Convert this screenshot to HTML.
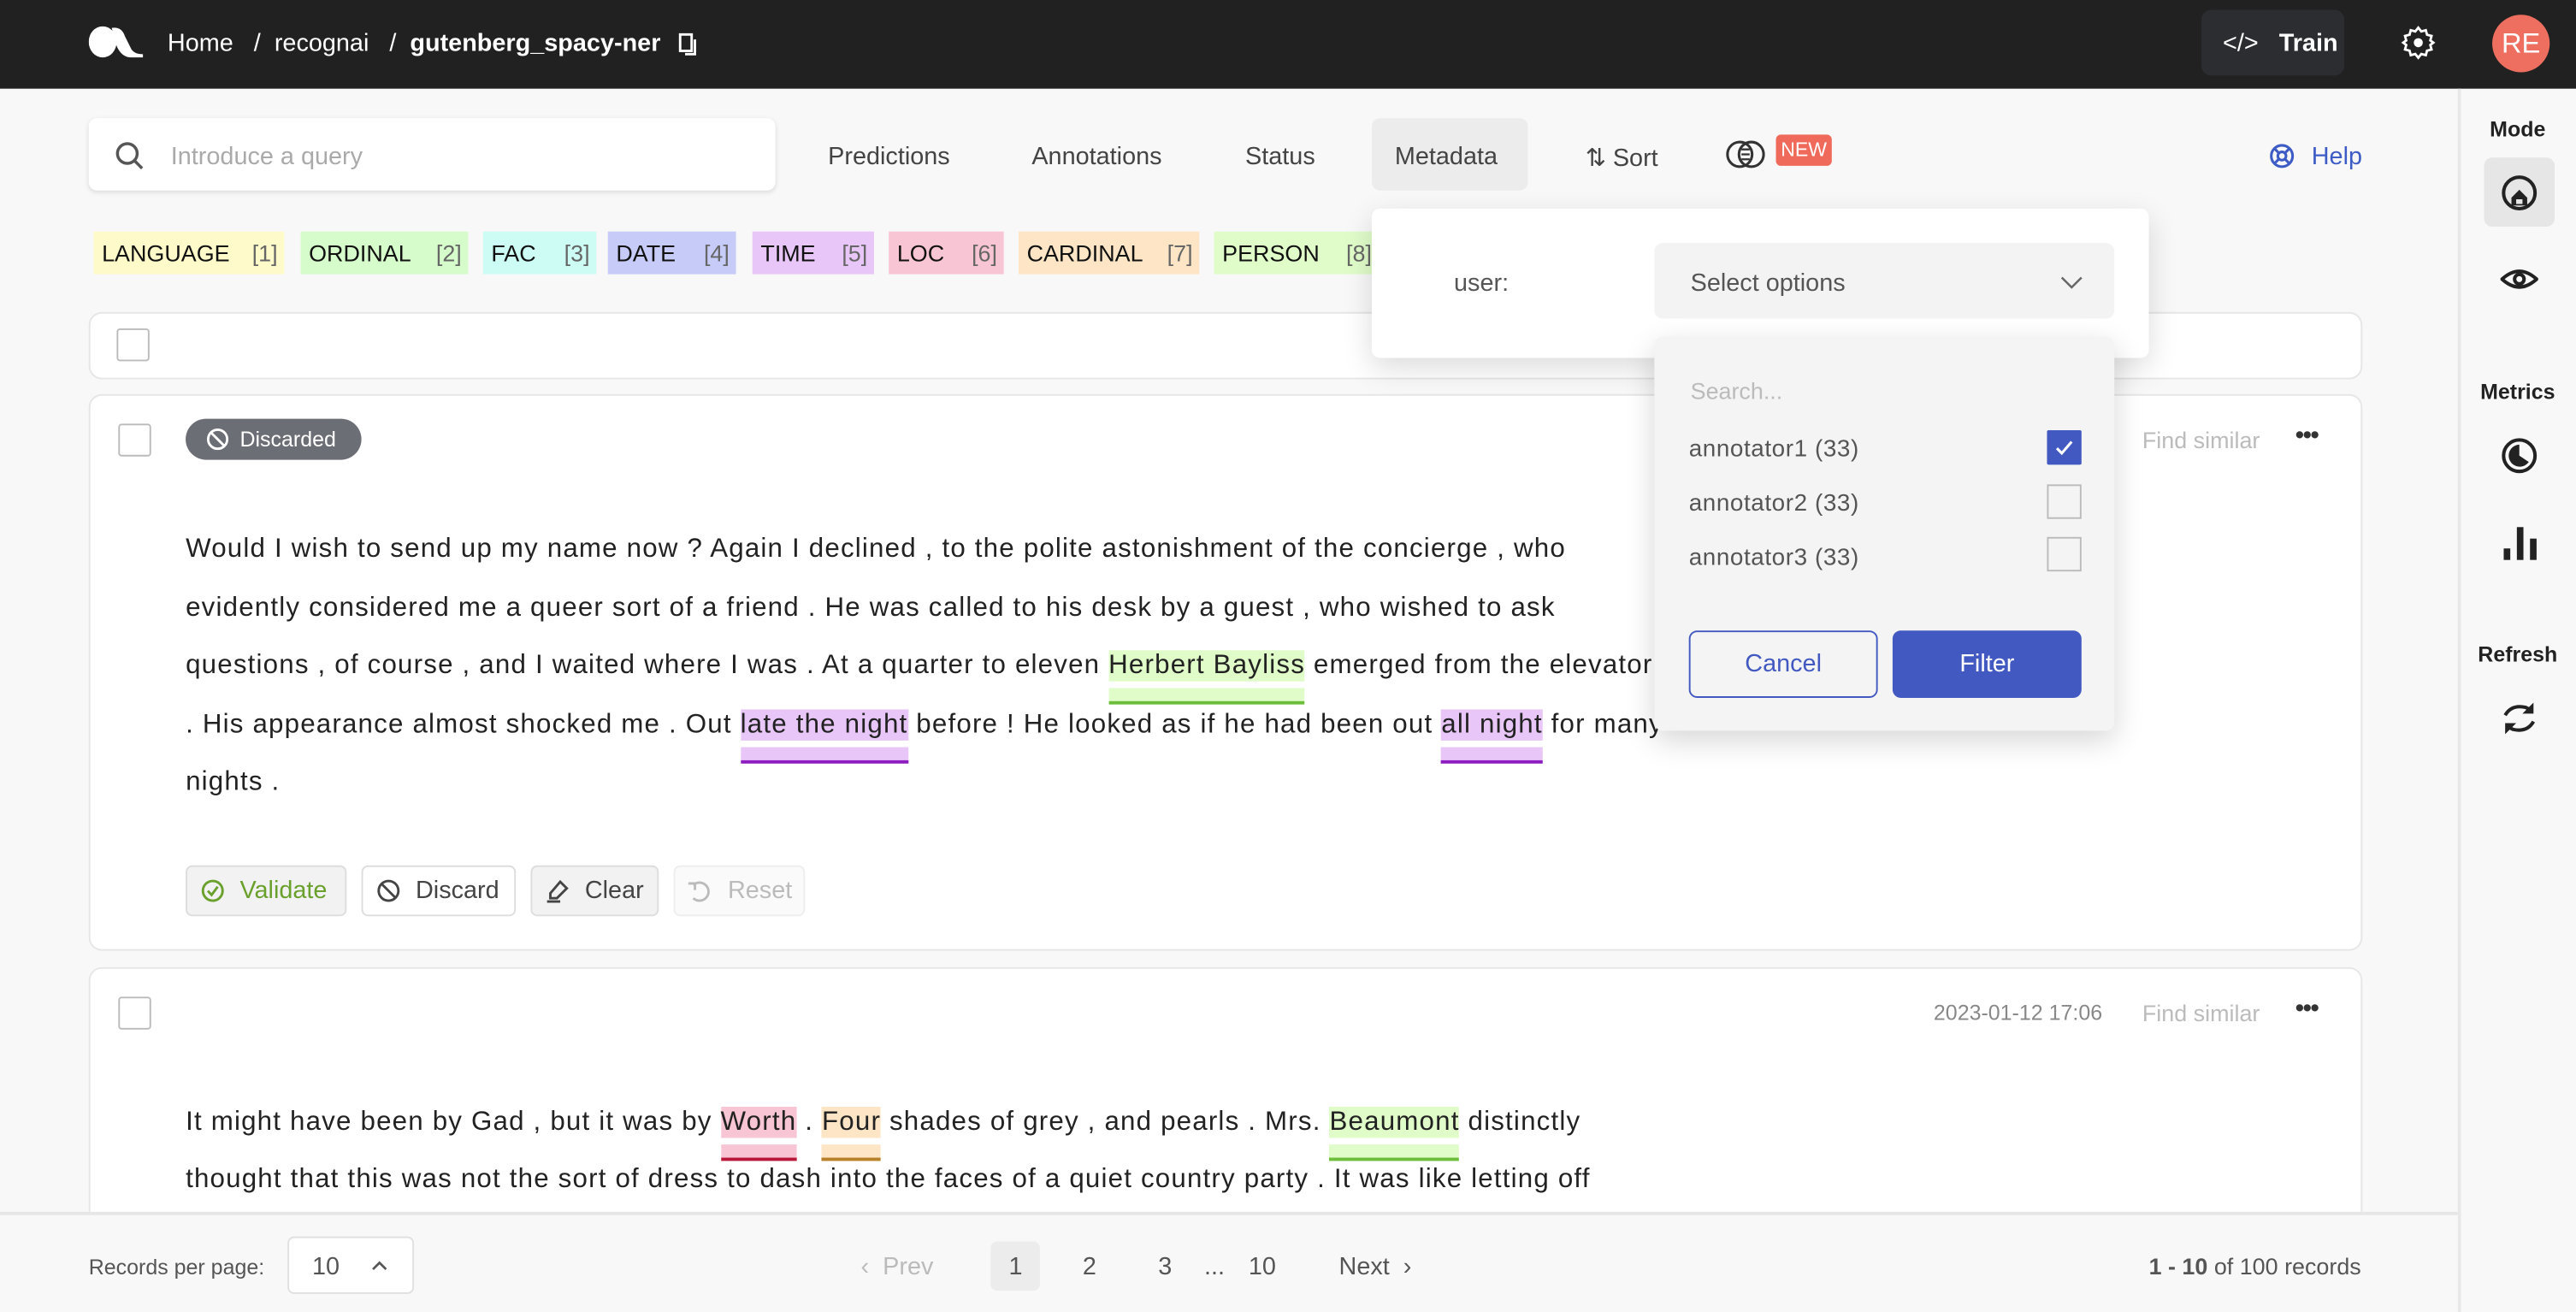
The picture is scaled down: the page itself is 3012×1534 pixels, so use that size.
<!DOCTYPE html>
<html><head><meta charset="utf-8"><style>
*{box-sizing:border-box;margin:0;padding:0}
html,body{width:3012px;height:1534px;overflow:hidden;background:#f8f8f8}
#r{position:absolute;left:0;top:0;width:1568px;height:799px;transform:scale(1.92092,1.91990);transform-origin:0 0;font-family:"Liberation Sans",sans-serif;color:#222;background:#f8f8f8;overflow:hidden}
.a{position:absolute;white-space:nowrap}
.top{left:0;top:0;width:1568px;height:54px;background:#212121}
.w{color:#fff;font-size:15px}
.card{background:#fff;border:1px solid #e6e6e6;border-radius:8px}
.cb{position:absolute;width:20px;height:20px;border:1px solid #bbb;border-radius:2px;background:#fff}
.tag{position:absolute;top:141px;height:26px;line-height:26px;font-size:14px;padding-left:5px;color:#111}
.tag b{font-weight:normal;color:#666;position:absolute;right:4px}
.tx{position:absolute;left:113px;font-size:16.3px;color:#222;white-space:nowrap;letter-spacing:0.62px}
.hl{position:relative;display:inline-block}
.hl:after{content:"";position:absolute;left:0;right:0;top:23px;height:8px;border-bottom:2.5px solid var(--c);background:var(--b)}
.btn{position:absolute;top:527px;height:31px;border:1px solid #ddd;border-radius:4px;font-size:15px;line-height:29px;padding-left:32px}
.tab{position:absolute;top:87px;font-size:15px;color:#444}
.sl{position:absolute;font-size:13px;font-weight:bold;color:#222;text-align:center;width:71px;left:1497px}
.pg{position:absolute;top:763px;font-size:15px;color:#555}
</style></head><body><div id="r">
<div class="a top"></div>
<svg class="a" style="left:54px;top:16px" width="34" height="19" viewBox="0 0 34 19"><ellipse cx="8.5" cy="9.5" rx="8.5" ry="9.5" fill="#fff"/><path d="M14 1 Q20 0 22 6 L26 14 Q28 17 33 17 L33 19 L26 19 Q20 19 17 12 Z" fill="#fff"/></svg>
<div class="a w" style="left:102px;top:18px">Home &nbsp;&nbsp;/ &nbsp;recognai &nbsp;&nbsp;/ &nbsp;<b>gutenberg_spacy-ner</b></div>
<svg class="a" style="left:413px;top:20px" width="12" height="14"><rect x="1" y="1" width="7" height="10" fill="none" stroke="#fff" stroke-width="1.5"/><path d="M10 4V13H4" fill="none" stroke="#fff" stroke-width="1.5"/></svg>
<div class="a" style="left:1340px;top:6px;width:87px;height:40px;background:#2b2d31;border-radius:6px"></div>
<div class="a w" style="left:1353px;top:18px;font-size:15px">&lt;/&gt; &nbsp;&nbsp;<b style="font-weight:600">Train</b></div>
<svg class="a" style="left:1461px;top:15px" width="22" height="22" viewBox="0 0 24 24"><path d="M12 2l2 2.5 3-.8.8 3 3 .8-.8 3L22 12l-2 1.5.8 3-3 .8-.8 3-3-.8L12 22l-2-2.5-3 .8-.8-3-3-.8.8-3L2 12l2-1.5-.8-3 3-.8.8-3 3 .8z" fill="none" stroke="#fff" stroke-width="1.6"/><circle cx="12" cy="12" r="3" fill="#fff"/></svg>
<div class="a" style="left:1517px;top:9px;width:35px;height:35px;border-radius:50%;background:#ee6f60;color:#fff;font-size:17px;text-align:center;line-height:35px">RE</div>

<div class="a" style="left:1496px;top:54px;width:2px;height:745px;background:#e8e8e8"></div>
<div class="sl" style="top:71px">Mode</div>
<div class="a" style="left:1512px;top:96px;width:43px;height:42px;background:#e6e6e6;border-radius:5px"></div>
<svg class="a" style="left:1522px;top:106px" width="23" height="23" viewBox="0 0 24 24"><circle cx="12" cy="12" r="10" fill="none" stroke="#222" stroke-width="2.2"/><path d="M7 20V15L12 10L17 15V20Z" fill="#222"/><path d="M10 19V16H14V19" fill="#e6e6e6"/></svg>
<svg class="a" style="left:1522px;top:160px" width="23" height="20" viewBox="0 0 24 20"><path d="M1 10Q12 0 23 10Q12 20 1 10Z" fill="none" stroke="#222" stroke-width="2.2"/><circle cx="12" cy="10" r="3" fill="none" stroke="#222" stroke-width="2.2"/></svg>
<div class="sl" style="top:231px">Metrics</div>
<svg class="a" style="left:1522px;top:266px" width="23" height="23" viewBox="0 0 24 24"><circle cx="12" cy="12" r="10" fill="none" stroke="#222" stroke-width="2.2"/><path d="M12 5A7 7 0 1 0 18 16L12 12Z" fill="#222"/></svg>
<svg class="a" style="left:1523px;top:320px" width="22" height="22"><rect x="1" y="14" width="4" height="7" fill="#222"/><rect x="9" y="1" width="4" height="20" fill="#222"/><rect x="17" y="8" width="4" height="13" fill="#222"/></svg>
<div class="sl" style="top:391px">Refresh</div>
<svg class="a" style="left:1522px;top:426px" width="23" height="23" viewBox="0 0 24 24"><path d="M3 10Q7 3 16 5L20 7" fill="none" stroke="#222" stroke-width="2.2"/><path d="M21 2V9H14Z" fill="#222"/><path d="M21 14Q17 21 8 19L4 17" fill="none" stroke="#222" stroke-width="2.2"/><path d="M3 22V15H10Z" fill="#222"/></svg>

<div class="a" style="left:54px;top:72px;width:418px;height:44px;background:#fff;border-radius:5px;box-shadow:0 1px 3px rgba(0,0,0,.12)"></div>
<svg class="a" style="left:70px;top:86px" width="18" height="18"><circle cx="7.5" cy="7.5" r="6" fill="none" stroke="#555" stroke-width="1.8"/><path d="M12 12L16.5 16.5" stroke="#555" stroke-width="1.8"/></svg>
<div class="a" style="left:104px;top:87px;font-size:15px;color:#aaa">Introduce a query</div>
<div class="tab" style="left:504px">Predictions</div>
<div class="tab" style="left:628px">Annotations</div>
<div class="tab" style="left:758px">Status</div>
<div class="a" style="left:835px;top:72px;width:95px;height:44px;background:#ececec;border-radius:5px"></div>
<div class="tab" style="left:849px">Metadata</div>
<div class="tab" style="left:965px">⇅ Sort</div>
<svg class="a" style="left:1050px;top:85px" width="26" height="18"><circle cx="9" cy="9" r="7.5" fill="none" stroke="#333" stroke-width="1.6"/><circle cx="16" cy="9" r="7.5" fill="none" stroke="#333" stroke-width="1.6"/><path d="M10 6H15M10 9H15M10 12H15" stroke="#333" stroke-width="1.2"/></svg>
<div class="a" style="left:1081px;top:82px;width:34px;height:19px;background:#f06a5b;border-radius:3px;color:#fff;font-size:12px;line-height:19px;text-align:center">NEW</div>
<svg class="a" style="left:1381px;top:87px" width="16" height="16"><circle cx="8" cy="8" r="6.5" fill="none" stroke="#3e5cc5" stroke-width="1.6"/><circle cx="8" cy="8" r="2.5" fill="none" stroke="#3e5cc5" stroke-width="1.6"/><path d="M3.5 3.5L6 6M12.5 3.5L10 6M3.5 12.5L6 10M12.5 12.5L10 10" stroke="#3e5cc5" stroke-width="1.6"/></svg>
<div class="a" style="left:1407px;top:87px;font-size:15px;color:#3e5cc5">Help</div>

<div class="tag" style="left:57px;width:116px;background:#fefac9">LANGUAGE<b>[1]</b></div>
<div class="tag" style="left:183px;width:102px;background:#d6fccb">ORDINAL<b>[2]</b></div>
<div class="tag" style="left:294px;width:69px;background:#cdfcf4">FAC<b>[3]</b></div>
<div class="tag" style="left:370px;width:78px;background:#c6cbf8">DATE<b>[4]</b></div>
<div class="tag" style="left:458px;width:74px;background:#e8c6f7">TIME<b>[5]</b></div>
<div class="tag" style="left:541px;width:70px;background:#f8c5d5">LOC<b>[6]</b></div>
<div class="tag" style="left:620px;width:110px;background:#fde5c6">CARDINAL<b>[7]</b></div>
<div class="tag" style="left:739px;width:100px;background:#e0fcc9">PERSON<b>[8]</b></div>

<div class="a card" style="left:54px;top:190px;width:1384px;height:41px"></div>
<div class="cb" style="left:71px;top:200px"></div>

<div class="a card" style="left:54px;top:240px;width:1384px;height:339px"></div>
<div class="cb" style="left:72px;top:258px"></div>
<div class="a" style="left:113px;top:255px;width:107px;height:25px;background:#6b6e74;border-radius:13px;color:#fff;font-size:13px;line-height:25px;padding-left:33px">Discarded</div>
<svg class="a" style="left:125px;top:260px" width="15" height="15"><circle cx="7.5" cy="7.5" r="5.8" fill="none" stroke="#fff" stroke-width="1.5"/><path d="M3.5 3.5L11.5 11.5" stroke="#fff" stroke-width="1.5"/></svg>
<div class="a" style="left:1304px;top:260px;font-size:14px;color:#bbb">Find similar</div>
<div class="a" style="left:1397px;top:257px;font-size:16px;color:#333;letter-spacing:-1px">•••</div>
<div class="tx" style="top:325px">Would I wish to send up my name now ? Again I declined , to the polite astonishment of the concierge , who</div>
<div class="tx" style="top:361px">evidently considered me a queer sort of a friend . He was called to his desk by a guest , who wished to ask</div>
<div class="tx" style="top:396px">questions , of course , and I waited where I was . At a quarter to eleven <span class="hl" style="background:#e0fcc9;--b:#e0fcc9;--c:#6cbd3a">Herbert Bayliss</span> emerged from the elevator</div>
<div class="tx" style="top:432px">. His appearance almost shocked me . Out <span class="hl" style="background:#e8c6f7;--b:#e8c6f7;--c:#8e1dc0">late the night</span> before ! He looked as if he had been out <span class="hl" style="background:#e8c6f7;--b:#e8c6f7;--c:#8e1dc0">all night</span> for many</div>
<div class="tx" style="top:467px">nights .</div>
<div class="btn" style="left:113px;width:98px;background:#f2f2f2;color:#6aa02c">Validate</div>
<svg class="a" style="left:122px;top:535px" width="15" height="15"><circle cx="7.5" cy="7.5" r="6" fill="none" stroke="#6aa02c" stroke-width="1.5"/><path d="M4.5 7.5L6.8 10L10.5 5" fill="none" stroke="#6aa02c" stroke-width="1.5"/></svg>
<div class="btn" style="left:220px;width:94px;background:#fff;color:#444">Discard</div>
<svg class="a" style="left:229px;top:535px" width="15" height="15"><circle cx="7.5" cy="7.5" r="6" fill="none" stroke="#444" stroke-width="1.5"/><path d="M3.5 3.5L11.5 11.5" stroke="#444" stroke-width="1.5"/></svg>
<div class="btn" style="left:323px;width:78px;background:#f2f2f2;color:#444">Clear</div>
<svg class="a" style="left:331px;top:534px" width="16" height="16"><path d="M4 10L10 3L14 7L8 13H4Z" fill="none" stroke="#444" stroke-width="1.5"/><path d="M2 15H10" stroke="#444" stroke-width="1.5"/></svg>
<div class="btn" style="left:410px;width:80px;background:#fafafa;color:#bbb;border-color:#eee">Reset</div>
<svg class="a" style="left:418px;top:535px" width="15" height="15"><path d="M4 4A5.5 5.5 0 1 1 4 12" fill="none" stroke="#bbb" stroke-width="1.5"/><path d="M1 3H5V7" fill="none" stroke="#bbb" stroke-width="1.5"/></svg>

<div class="a card" style="left:54px;top:589px;width:1384px;height:240px"></div>
<div class="cb" style="left:72px;top:607px"></div>
<div class="a" style="left:1177px;top:609px;font-size:13px;color:#888">2023-01-12 17:06</div>
<div class="a" style="left:1304px;top:609px;font-size:14px;color:#bbb">Find similar</div>
<div class="a" style="left:1397px;top:606px;font-size:16px;color:#333;letter-spacing:-1px">•••</div>
<div class="tx" style="top:674px">It might have been by Gad , but it was by <span class="hl" style="background:#f8c5d5;--b:#f8c5d5;--c:#b8183a">Worth</span> . <span class="hl" style="background:#fde5c6;--b:#fde5c6;--c:#b8802a">Four</span> shades of grey , and pearls . Mrs. <span class="hl" style="background:#e0fcc9;--b:#e0fcc9;--c:#6cbd3a">Beaumont</span> distinctly</div>
<div class="tx" style="top:709px">thought that this was not the sort of dress to dash into the faces of a quiet country party . It was like letting off</div>

<div class="a" style="left:0;top:738px;width:1496px;height:61px;background:#f8f8f8;border-top:2px solid #e6e6e6"></div>
<div class="a" style="left:54px;top:764px;font-size:13px;color:#555">Records per page:</div>
<div class="a" style="left:175px;top:753px;width:77px;height:35px;background:#fff;border:1px solid #e0e0e0;border-radius:4px"></div>
<div class="a" style="left:190px;top:763px;font-size:15px;color:#555">10</div>
<svg class="a" style="left:225px;top:767px" width="12" height="8"><path d="M2 6L6 2L10 6" fill="none" stroke="#555" stroke-width="1.4"/></svg>
<div class="pg" style="left:524px;color:#bbb">‹ &nbsp;Prev</div>
<div class="a" style="left:603px;top:756px;width:30px;height:30px;background:#ececec;border-radius:4px"></div>
<div class="pg" style="left:614px">1</div>
<div class="pg" style="left:659px">2</div>
<div class="pg" style="left:705px">3</div>
<div class="pg" style="left:733px">...</div>
<div class="pg" style="left:760px">10</div>
<div class="pg" style="left:815px">Next &nbsp;›</div>
<div class="a" style="left:1308px;top:763px;font-size:14px;color:#555"><b>1 - 10</b> of 100 records</div>

<div class="a" style="left:835px;top:127px;width:473px;height:91px;background:#fff;border-radius:5px;box-shadow:0 6px 18px rgba(0,0,0,.14)"></div>
<div class="a" style="left:885px;top:164px;font-size:15px;color:#555">user:</div>
<div class="a" style="left:1007px;top:148px;width:280px;height:46px;background:#f3f3f3;border-radius:5px"></div>
<div class="a" style="left:1029px;top:164px;font-size:15px;color:#555">Select options</div>
<svg class="a" style="left:1254px;top:167px" width="14" height="10"><path d="M1 2L7 8L13 2" fill="none" stroke="#666" stroke-width="1.3"/></svg>
<div class="a" style="left:1007px;top:205px;width:280px;height:240px;background:#f4f4f4;border-radius:5px;box-shadow:0 6px 18px rgba(0,0,0,.16)"></div>
<div class="a" style="left:1029px;top:230px;font-size:14px;color:#bbb">Search...</div>
<div class="a" style="left:1028px;top:266px;font-size:14.5px;color:#555;letter-spacing:0.3px">annotator1 (33)</div>
<div class="a" style="left:1028px;top:299px;font-size:14.5px;color:#555;letter-spacing:0.3px">annotator2 (33)</div>
<div class="a" style="left:1028px;top:332px;font-size:14.5px;color:#555;letter-spacing:0.3px">annotator3 (33)</div>
<div class="a" style="left:1246px;top:262px;width:21px;height:21px;background:#4259c1;border-radius:1px"></div>
<svg class="a" style="left:1250px;top:267px" width="13" height="11"><path d="M2 6L5 9L11 2" fill="none" stroke="#fff" stroke-width="1.6"/></svg>
<div class="a" style="left:1246px;top:295px;width:21px;height:21px;border:1px solid #bbb;background:#f4f4f4"></div>
<div class="a" style="left:1246px;top:327px;width:21px;height:21px;border:1px solid #bbb;background:#f4f4f4"></div>
<div class="a" style="left:1028px;top:384px;width:115px;height:41px;border:1.5px solid #4259c1;border-radius:5px;color:#4259c1;font-size:15px;text-align:center;line-height:39px">Cancel</div>
<div class="a" style="left:1152px;top:384px;width:115px;height:41px;background:#4259c1;border-radius:5px;color:#fff;font-size:15px;text-align:center;line-height:41px">Filter</div>
</div></body></html>
